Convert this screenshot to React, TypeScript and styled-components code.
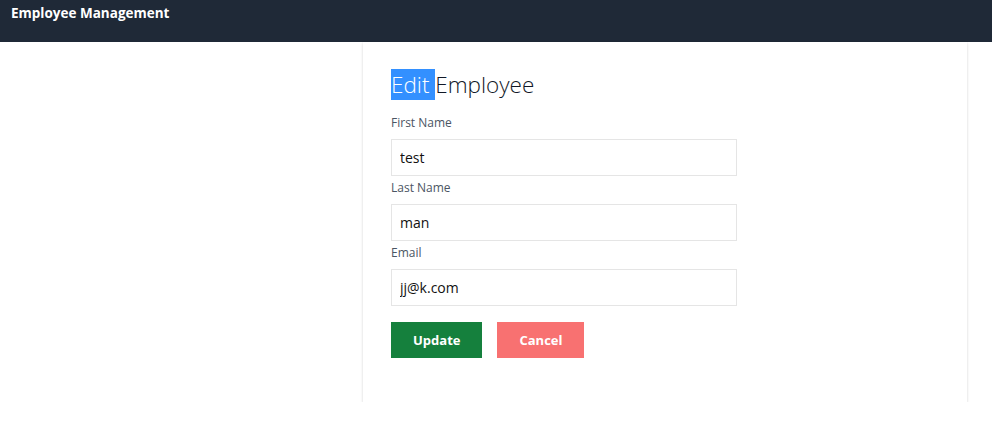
import React, { useState } from "react";
import styled, { createGlobalStyle } from "styled-components";

const GlobalStyle = createGlobalStyle`
  * {
    box-sizing: border-box;
  }

  body {
    margin: 0;
    background: #ffffff;
    font-family: "Open Sans", "Noto Sans", sans-serif;
    color: #111827;
  }
`;

function App() {
  const [form, setForm] = useState({
    firstName: "test",
    lastName: "man",
    email: "jj@k.com",
  });

  const handleChange = (e: React.ChangeEvent<HTMLInputElement>) => {
    setForm({ ...form, [e.target.name]: e.target.value });
  };

  return (
    <>
      <GlobalStyle />
      <NavBar>
        <Brand>Employee Management</Brand>
      </NavBar>

      <PageWrap>
        <Card>
          <Title>
            <Selected>Edit </Selected>Employee
          </Title>

          <Form onSubmit={(e) => e.preventDefault()}>
            <Field>
              <Label htmlFor="firstName">First Name</Label>
              <Input
                id="firstName"
                name="firstName"
                value={form.firstName}
                onChange={handleChange}
              />
            </Field>
            <Field>
              <Label htmlFor="lastName">Last Name</Label>
              <Input
                id="lastName"
                name="lastName"
                value={form.lastName}
                onChange={handleChange}
              />
            </Field>
            <Field>
              <Label htmlFor="email">Email</Label>
              <Input
                id="email"
                name="email"
                value={form.email}
                onChange={handleChange}
              />
            </Field>

            <ButtonRow>
              <Button type="submit" $variant="update">
                Update
              </Button>
              <Button type="button" $variant="cancel">
                Cancel
              </Button>
            </ButtonRow>
          </Form>
        </Card>
      </PageWrap>
    </>
  );
}

const NavBar = styled.header`
  display: flex;
  align-items: flex-start;
  height: 42px;
  padding: 4px 11px;
  background: #1f2937;
`;

const Brand = styled.div`
  color: #ffffff;
  font-size: 13.5px;
  font-weight: 700;
  line-height: 19px;
`;

const PageWrap = styled.main`
  display: flex;
  padding: 0 25px 0 363px;
`;

const Card = styled.section`
  width: 604px;
  padding: 28px 28px 44px;
  background: #ffffff;
  box-shadow: 0 2px 3px 0 rgba(0, 0, 0, 0.12),
    0 0 2px 0 rgba(0, 0, 0, 0.07);
`;

const Title = styled.h1`
  margin: 0 0 15px;
  font-size: 22.5px;
  font-weight: 300;
  line-height: 29px;
  color: #111827;
`;

const Selected = styled.span`
  background: #3390ff;
  color: #ffffff;
`;

const Form = styled.form`
  display: flex;
  flex-direction: column;
  width: 346px;
  gap: 3px;
`;

const Field = styled.div`
  display: flex;
  flex-direction: column;
`;

const Label = styled.label`
  margin-bottom: 7px;
  font-size: 12px;
  line-height: 18px;
  color: #4b5563;
`;

const Input = styled.input`
  height: 37px;
  padding: 0 8px;
  border: 1px solid #e5e5e5;
  font-family: inherit;
  font-size: 14px;
  color: #111111;
  outline: none;
`;

const ButtonRow = styled.div`
  display: flex;
  gap: 15px;
  margin-top: 13px;
`;

const Button = styled.button<{ $variant: "update" | "cancel" }>`
  height: 36px;
  padding: 0 22px;
  border: none;
  font-family: inherit;
  font-size: 13px;
  font-weight: 700;
  color: #ffffff;
  background: ${({ $variant }) =>
    $variant === "update" ? "#15803d" : "#f87171"};
  cursor: pointer;
`;

export default App;
